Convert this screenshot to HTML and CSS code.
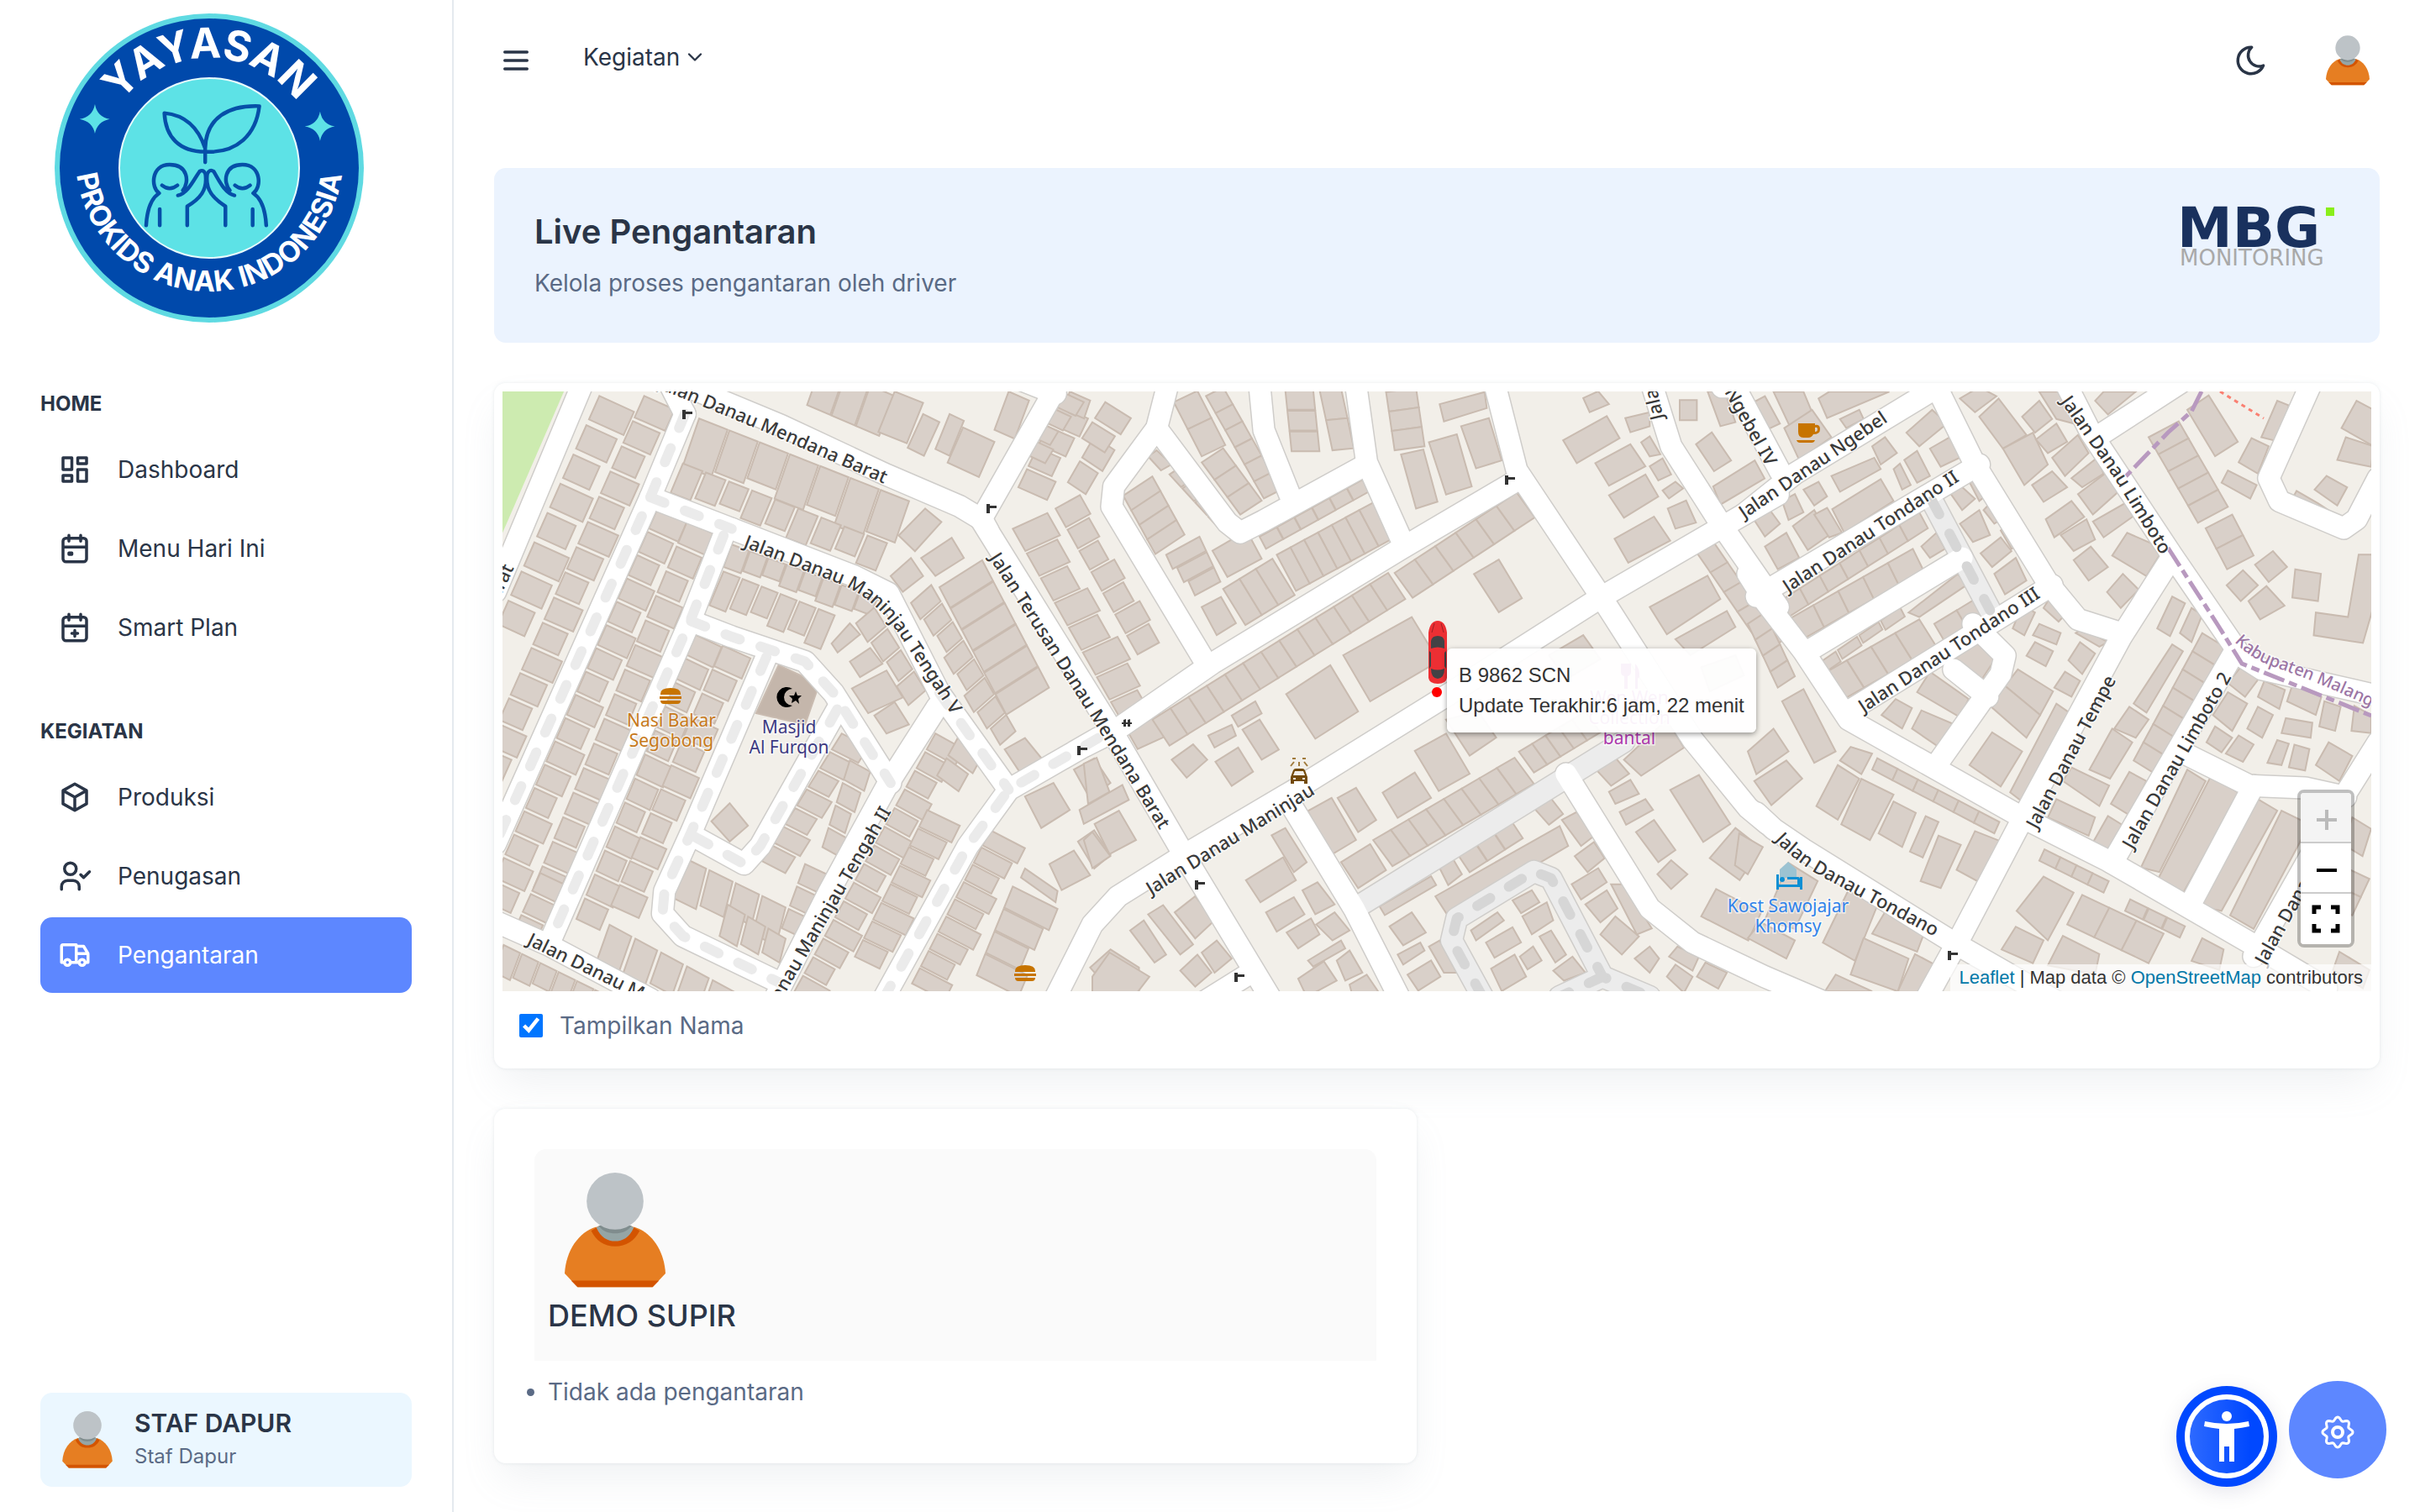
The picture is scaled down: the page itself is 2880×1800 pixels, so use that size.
FILE: index.html
```html
<!DOCTYPE html>
<html lang="id">
<head>
<meta charset="utf-8">
<meta name="viewport" content="width=device-width, initial-scale=1">
<title>Live Pengantaran</title>
<link rel="stylesheet" href="styles.css">
</head>
<body>
<svg width="0" height="0" class="sprite" aria-hidden="true">
  <symbol id="person" viewBox="0 0 156 178">
    <path d="M0 156C2 120 22 92 48 84H108C134 92 154 120 156 156L136 177H20Z" fill="#e67e22"/>
    <path d="M10 167H146L136 177H20Z" fill="#d35400"/>
    <path d="M41 90L52 83H104L116 90C108 106 95 114 78 114S49 106 41 90Z" fill="#d35400"/>
    <path d="M49 85L58 80H98L107 85C100 100 90 106 78 106S56 100 49 85Z" fill="#95a5a5"/>
    <path d="M52 82H104C96 92 88 94 78 94S60 92 52 82Z" fill="#7f8c8d"/>
    <circle cx="78" cy="44" r="44" fill="#bdc3c7"/>
  </symbol>
</svg>
<div class="layout">
  <aside class="sidebar">
    <a href="#" class="brand" aria-label="Yayasan Prokids Anak Indonesia">
      <svg viewBox="48 0 400 400" width="400" height="400">
        <defs>
          <path id="arcTop" d="M118 200A131 131 0 0 1 380 200"/>
          <path id="arcBottom" d="M91 170A159 159 0 1 0 407 170"/>
        </defs>
        <circle cx="249" cy="200" r="184" fill="#5fdae2"/>
        <circle cx="249" cy="200" r="178" fill="#0049ab"/>
        <circle cx="249" cy="200" r="107" fill="#5de2e6" stroke="#e8fbfc" stroke-width="2"/>
        <text class="seal-top"><textPath href="#arcTop" startOffset="50%">YAYASAN</textPath></text>
        <text class="seal-bottom"><textPath href="#arcBottom" startOffset="50%">PROKIDS ANAK INDONESIA</textPath></text>
        <g transform="scale(.3444 .3333)">
          <path d="M328 372Q336 418 379 425Q336 434 328 477Q320 434 275 425Q320 418 328 372ZM1106 398Q1114 444 1157 451Q1114 460 1106 503Q1098 460 1053 451Q1098 444 1106 398Z" fill="#5de2e6"/>
          <g fill="none" stroke="#064fa8" stroke-width="13" stroke-linecap="round" stroke-linejoin="round">
            <path d="M709 580V530C690 470 650 412 568 404C572 490 620 542 709 542C820 548 885 480 896 379C790 375 712 420 709 530"/>
            <path d="M505 805C508 750 520 710 550 690C520 670 522 588 586 588C650 588 655 650 632 680M560 662Q586 684 613 662M615 698C650 690 670 640 690 612Q704 604 710 622C718 680 690 710 647 737V805M552 747V805"/>
            <path d="M920 805C917 750 905 710 875 690C905 670 903 588 838 588C775 588 770 650 794 680M812 662Q838 684 864 662M810 698C775 690 755 640 738 612Q724 602 716 622C708 680 740 710 779 737V805M873 747V805"/>
          </g>
        </g>
      </svg>
    </a>
    <nav class="nav">
      <h2 class="nav-title">HOME</h2>
      <ul class="nav-list">
        <li><a href="#" class="nav-link"><svg class="icon" viewBox="0 0 24 24"><path d="M4 4h6v8h-6zM4 16h6v4h-6zM14 12h6v8h-6zM14 4h6v4h-6z"/></svg>Dashboard</a></li>
        <li><a href="#" class="nav-link"><svg class="icon" viewBox="0 0 24 24"><path d="M4 7a2 2 0 0 1 2-2h12a2 2 0 0 1 2 2v12a2 2 0 0 1-2 2H6a2 2 0 0 1-2-2zM16 3v4M8 3v4M4 11h16M8 15h2v1H8z"/></svg>Menu Hari Ini</a></li>
        <li><a href="#" class="nav-link"><svg class="icon" viewBox="0 0 24 24"><path d="M4 7a2 2 0 0 1 2-2h12a2 2 0 0 1 2 2v12a2 2 0 0 1-2 2H6a2 2 0 0 1-2-2zM16 3v4M8 3v4M4 11h16M10 16h4M12 14v4"/></svg>Smart Plan</a></li>
      </ul>
      <h2 class="nav-title">KEGIATAN</h2>
      <ul class="nav-list">
        <li><a href="#" class="nav-link"><svg class="icon" viewBox="0 0 24 24"><path d="M12 3l8 4.500v9L12 21l-8-4.500v-9zM12 12l8-4.500M12 12v9M12 12L4 7.500"/></svg>Produksi</a></li>
        <li><a href="#" class="nav-link"><svg class="icon" viewBox="0 0 24 24"><path d="M5 7a4 4 0 1 0 8 0a4 4 0 1 0-8 0M3 21v-2a4 4 0 0 1 4-4h4a4 4 0 0 1 4 4v2M16 11l2 2l4-4"/></svg>Penugasan</a></li>
        <li><a href="#" class="nav-link active" aria-current="page"><svg class="icon" viewBox="0 0 24 24"><path d="M5 17a2 2 0 1 0 4 0a2 2 0 1 0-4 0M15 17a2 2 0 1 0 4 0a2 2 0 1 0-4 0M5 17H3V6a1 1 0 0 1 1-1h9v12M9 17h6M19 17h2v-6h-8M13 6h5l3 5"/></svg>Pengantaran</a></li>
      </ul>
    </nav>
    <div class="profile">
      <svg width="60" height="68" aria-hidden="true"><use href="#person"/></svg>
      <div>
        <p class="profile-name">STAF DAPUR</p>
        <p class="profile-role">Staf Dapur</p>
      </div>
    </div>
  </aside>

  <div class="page">
    <header class="topbar">
      <button type="button" class="bare" aria-label="Menu"><svg class="icon icon-menu" viewBox="0 0 24 24"><path d="M4 6h16M4 12h16M4 18h16"/></svg></button>
      <button type="button" class="bare topbar-menu">Kegiatan<svg class="icon icon-chevron" viewBox="0 0 24 24"><path d="M6 9l6 6l6-6"/></svg></button>
      <button type="button" class="bare topbar-theme" aria-label="Mode gelap"><svg class="icon" viewBox="0 0 24 24"><path d="M12 3h.393a7.500 7.500 0 0 0 7.920 12.446A9 9 0 1 1 12 2.992z"/></svg></button>
      <button type="button" class="bare" aria-label="Akun"><svg width="52" height="60"><use href="#person"/></svg></button>
    </header>

    <main class="content">
      <section class="banner">
        <div>
          <h1>Live Pengantaran</h1>
          <p>Kelola proses pengantaran oleh driver</p>
        </div>
        <svg class="mbg" viewBox="0 0 184 76" width="184" height="76" role="img" aria-label="MBG Monitoring">
          <text class="mbg-main" x="-5" y="50">MBG</text>
          <text class="mbg-sub" x="-2" y="72">MONITORING</text>
          <rect x="172" y="3" width="10" height="10" fill="#89ee1a"/>
        </svg>
      </section>

      <section class="card map-card">
        <div class="map">
          <svg class="map-canvas" viewBox="598 466 2224 714" preserveAspectRatio="xMidYMid slice">
            <defs>
              <path id="p1" d="M740 446L805 471L919 518L997 552L1052 576"/>
              <path id="p2" d="M884 651L1004 697Q1040 713 1068 752L1132 850"/>
              <path id="p3" d="M1177 664L1300 857L1390 1004"/>
              <path id="p4" d="M860 1310L1061 966"/>
              <path id="p5" d="M626 1124L900 1258"/>
              <path id="p6" d="M1370 1066L1580 936"/>
              <path id="p7" d="M1980 498L1944 340"/>
              <path id="p8" d="M1970 320L2102 556"/>
              <path id="p9" d="M2076 618L2270 486"/>
              <path id="p10" d="M2128 706L2360 554"/>
              <path id="p11" d="M2218 849L2450 697"/>
              <path id="p12" d="M2452 478L2516 569L2592 694"/>
              <path id="p13" d="M2659 764Q2680 786 2712 796Q2760 812 2840 850"/>
              <path id="p14" d="M2424 988L2533 782"/>
              <path id="p15" d="M2538 1012L2668 785"/>
              <path id="p16" d="M2112 1000Q2140 1030 2180 1050L2330 1130"/>
              <path id="p17" d="M2696 1150L2800 962"/>
              <path id="p18" d="M500 910L612 676"/>
            </defs>
            <rect x="598" y="466" width="2224" height="714" fill="#f2efe9"/>
            <g id="buildings" class="buildings"></g>
            <g id="roads"></g>
            <g class="boundary">
              <path d="M2620 466L2608 490L2580 515L2530 567"/>
              <path d="M2580 652L2640 745L2668 790L2822 852"/>
              <path class="footway" d="M2642 466L2694 498"/>
            </g>
            <g class="street">
              <text class="end"><textPath href="#p1" startOffset="100%">Jalan Danau Mendana Barat</textPath></text>
              <text><textPath href="#p2">Jalan Danau Maninjau Tengah V</textPath></text>
              <text><textPath href="#p3">Jalan Terusan Danau Mendana Barat</textPath></text>
              <text class="end"><textPath href="#p4" startOffset="100%">Jalan Danau Maninjau Tengah II</textPath></text>
              <text><textPath href="#p5">Jalan Danau Maninjau</textPath></text>
              <text><textPath href="#p6">Jalan Danau Maninjau</textPath></text>
              <text><textPath href="#p7">Jalan Danau</textPath></text>
              <text class="end"><textPath href="#p8" startOffset="100%">Jalan Danau Ngebel IV</textPath></text>
              <text><textPath href="#p9">Jalan Danau Ngebel</textPath></text>
              <text><textPath href="#p10">Jalan Danau Tondano II</textPath></text>
              <text><textPath href="#p11">Jalan Danau Tondano III</textPath></text>
              <text><textPath href="#p12">Jalan Danau Limboto</textPath></text>
              <text class="district"><textPath href="#p13">Kabupaten Malang</textPath></text>
              <text><textPath href="#p14">Jalan Danau Tempe</textPath></text>
              <text><textPath href="#p15">Jalan Danau Limboto 2</textPath></text>
              <text><textPath href="#p16">Jalan Danau Tondano</textPath></text>
              <text><textPath href="#p17">Jalan Danau</textPath></text>
              <text class="end"><textPath href="#p18" startOffset="100%">Barat</textPath></text>
            </g>
            <g class="place">
              <text x="799" y="865" fill="#c77a1c">Nasi Bakar</text><text x="799" y="889" fill="#c77a1c">Segobong</text>
              <text x="939" y="873" fill="#3d3a82">Masjid</text><text x="939" y="897" fill="#3d3a82">Al Furqon</text>
              <text x="2128" y="1086" fill="#2f82ea">Kost Sawojajar</text><text x="2128" y="1110" fill="#2f82ea">Khomsy</text>
              <text x="1939" y="838" fill="#ac39ac">Wen Wen</text><text x="1939" y="862" fill="#ac39ac">Collection</text><text x="1939" y="886" fill="#ac39ac">bantal</text>
            </g>
            <g id="gates" fill="#333"></g>
            <g fill="#c77400">
              <path id="burger" d="M786 826q0-7 12-7t12 7v1h-24zM785 829h26v3h-26zM786 834h24q0 4-4 4h-16q-4 0-4-4z"/>
              <use href="#burger" x="422" y="330"/>
              <path d="M2140 504h20v2q6-1 6 5t-8 6q-2 4-6 4h-6q-6 0-6-7zM2160 509v5q3 0 3-3t-3-2zM2138 524h22q-1 3-4 3h-14q-3 0-4-3z"/>
            </g>
            <path d="M943 820A12 12 0 1 0 943 840A10 10 0 1 1 943 820ZM947 823l2 5h5l-4 4 1 6-4-4-5 3 1-5-4-4h6z" fill="#000"/>
            <path d="M2128 1026l10 9v10h-20v-10z" fill="#9cc3d2"/>
            <path d="M2114 1041h3v12h22v-6h-12v-3h13q2 0 2 3v-3h3v15h-3v-3h-25v3h-3zM2118 1047a3 3 0 1 0 6 0a3 3 0 1 0-6 0" fill="#0c8fd4"/>
            <path d="M1536 925l3-8q1-2 3-2h8q2 0 3 2l3 8v8h-4v-3h-12v3h-4z" fill="#734a08"/>
            <path d="M1541 918h10l2 5h-14zM1539 926h3v2h-3zM1550 926h3v2h-3z" fill="#f2efe9"/>
            <path d="M1540 907l-4 5M1552 907l4 5M1546 907v5M1538 903h4M1550 903h4" stroke="#a07a3c" stroke-width="2"/>
            <path d="M1929 790v10q0 4 4 5v15h4v-15q4-1 4-5v-10M1946 820v-30q6 6 5 16l-2 2v12z" fill="#ac39ac"/>
          </svg>
          <div class="marker">
            <svg width="24" height="92" viewBox="0 0 24 92" aria-label="B 9862 SCN">
              <path d="M1 14Q3 0 12 0T23 14V68Q22 75 12 75T1 68Z" fill="#ec2f33"/>
              <path d="M4 24Q5 18 12 18T20 24V33Q12 30 4 33ZM4 57Q12 60 20 57Q20 68 12 69Q4 68 4 57ZM2 36l2 2v16l-2 3zM22 36l-2 2v16l2 3z" fill="#424245"/>
              <path d="M5 14L8 3M19 14L16 3" stroke="#9d1f25" stroke-width="1"/>
              <circle cx="11" cy="85" r="6" fill="#ff0000"/>
            </svg>
            <div class="tooltip">B 9862 SCN<br>Update Terakhir:6 jam, 22 menit</div>
          </div>
          <div class="map-tools">
            <div class="zoom">
              <button type="button" disabled aria-label="Perbesar"><svg viewBox="0 0 60 56"><path d="M19 31h24M31 19v24" stroke="#bbb" stroke-width="4"/></svg></button>
              <button type="button" aria-label="Perkecil"><svg viewBox="0 0 60 56"><path d="M19 31h24" stroke="#000" stroke-width="4"/></svg></button>
              <button type="button" aria-label="Layar penuh"><svg viewBox="0 0 60 56"><path d="M16 22v-8h8M36 14h8v8M44 34v8h-8M24 42h-8v-8" fill="none" stroke="#000" stroke-width="5"/></svg></button>
            </div>
            <p class="credit"><a href="#">Leaflet</a> | Map data © <a href="#">OpenStreetMap</a> contributors</p>
          </div>
        </div>
        <label class="check"><input type="checkbox" checked>Tampilkan Nama</label>
      </section>

      <div class="drivers">
        <section class="card driver">
          <div class="driver-head">
            <svg width="120" height="137" aria-hidden="true"><use href="#person"/></svg>
            <h2>DEMO SUPIR</h2>
          </div>
          <ul class="driver-list"><li>Tidak ada pengantaran</li></ul>
        </section>
      </div>
    </main>
  </div>
</div>

<div class="floating">
  <button type="button" class="access" aria-label="Aksesibilitas">
    <svg viewBox="0 0 120 120" width="120" height="120">
      <defs><linearGradient id="blue" x1="0" y1="0" x2="1" y2="0"><stop offset="0" stop-color="#2f6bff"/><stop offset=".8" stop-color="#0048ff"/></linearGradient></defs>
      <circle cx="60" cy="60" r="60" fill="#0048ff"/>
      <circle cx="60" cy="60" r="47" fill="url(#blue)" stroke="#fff" stroke-width="6"/>
      <circle cx="60" cy="36" r="6" fill="#fff"/>
      <path d="M34 42Q60 48 86 42L87 48Q78 50 69 51V90H63V72H57V90H51V51Q42 50 33 48Z" fill="#fff"/>
    </svg>
  </button>
  <button type="button" class="settings" aria-label="Pengaturan">
    <svg viewBox="0 0 40 40" width="40" height="40" fill="none" stroke="#fff" stroke-width="3"><path id="gear" d=""/><circle cx="20" cy="20" r="6" stroke-width="4"/></svg>
  </button>
</div>
<script src="map.js"></script>
</body>
</html>
```
FILE: styles.css
```css
*{box-sizing:border-box}
body{margin:0;background:#fff;color:#5a6a85;font-family:Inter,"Liberation Sans",sans-serif;font-size:28px;line-height:42px}
h1,h2,p,ul{margin:0;padding:0}
a{text-decoration:none}
button{font:inherit;cursor:pointer}
svg{display:block;flex:none}
.sprite{position:absolute}
.layout{display:flex;min-height:100vh}

.sidebar{width:540px;flex:none;display:flex;flex-direction:column;padding:0 48px 30px;border-right:2px solid #e5eaef}
.brand{display:block;margin-bottom:66px}
.seal-top,.seal-bottom{fill:#fff;font-weight:700;text-anchor:middle}
.seal-top{font-size:50px}
.seal-bottom{font-size:34px}
.nav{flex:1}
.nav-title{font-size:24px;line-height:30px;font-weight:700;color:#2a3547;margin-bottom:18px}
.nav-list{list-style:none;display:flex;flex-direction:column;gap:4px;margin-bottom:64px}
.nav-link{display:flex;align-items:center;gap:30px;height:90px;padding:0 20px;border-radius:14px;color:#2a3547}
.nav-link.active{background:#5d87ff;color:#fff}
.icon{width:42px;height:42px;fill:none;stroke:currentColor;stroke-width:2;stroke-linecap:round;stroke-linejoin:round}
.profile{display:flex;align-items:center;gap:26px;height:112px;padding:0 26px;border-radius:14px;background:#ebf7ff}
.profile-name{font-size:30px;line-height:44px;font-weight:600;color:#2a3547}
.profile-role{font-size:24px;line-height:36px;padding-bottom:4px}

.page{flex:1;min-width:0}
.topbar{display:flex;align-items:center;height:144px;padding:0 60px 0 54px}
.bare{display:flex;align-items:center;padding:0;border:0;background:none;color:#2a3547}
.icon-menu{width:40px;height:40px}
.topbar-menu{margin-left:60px;padding-bottom:8px;gap:4px}
.icon-chevron{width:28px;height:28px}
.topbar-theme{margin:0 68px 0 auto}
.content{padding:56px 48px 48px}
.banner{display:flex;justify-content:space-between;align-items:flex-start;min-height:208px;padding:44px 52px 44px 48px;border-radius:14px;background:#ebf3fe;margin-bottom:48px}
.banner h1{font-size:40px;line-height:64px;font-weight:600;color:#2a3547}
.banner p{padding-top:8px}
.mbg{overflow:visible}
.mbg-main{font:700 66px "DejaVu Sans",sans-serif;fill:#19315e}
.mbg-sub{font:26px "DejaVu Sans",sans-serif;fill:#a9a9a9}
.card{background:#fff;border-radius:14px;box-shadow:0 0 4px rgba(145,158,171,.2),0 24px 48px -8px rgba(145,158,171,.14)}

.map-card{padding:10px;margin-bottom:48px}
.map{position:relative;height:714px;overflow:hidden;font-family:"Liberation Sans",Arial,sans-serif;font-size:24px;line-height:36px;color:#333}
.map-canvas{width:100%;height:100%}
.buildings{fill:#d9d0c9;stroke:#c9bbb0;stroke-width:2}
.buildings .worship{fill:#c4b6ab}
.buildings .green{fill:#cdebb0;stroke:none}
.street{font:500 22px "Noto Sans",sans-serif;fill:#3a3a3a;stroke:#fff;stroke-width:3;stroke-opacity:.7;paint-order:stroke}
.street .end{text-anchor:end}
.street .district{font-size:20px;fill:#9c76a5}
.place{font:21px "Noto Sans",sans-serif;text-anchor:middle;stroke:#fff;stroke-width:3;stroke-opacity:.6;paint-order:stroke}
.boundary{fill:none;stroke:#b899bf;stroke-width:5;stroke-dasharray:26 6 10 6}
.boundary .footway{stroke:#fa8072;stroke-width:3;stroke-dasharray:5 5}
.marker{position:absolute;left:50%;top:273px;margin-left:-11px}
.tooltip{position:absolute;left:23px;top:33px;padding:14px;white-space:nowrap;border-radius:6px;background:rgba(255,255,255,.94);box-shadow:0 2px 6px rgba(0,0,0,.4)}
.map-tools{position:absolute;right:0;bottom:0;display:flex;flex-direction:column;align-items:flex-end;gap:20px}
.zoom{width:68px;margin-right:20px;border:4px solid rgba(0,0,0,.25);border-radius:8px;background-clip:padding-box;overflow:hidden}
.zoom button{display:block;width:60px;height:60px;padding:0;border:0;border-bottom:2px solid #ccc;background:#fff}
.zoom button:last-child{border:0}
.zoom button:disabled{background:#f4f4f4}
.zoom svg{width:60px;height:56px}
.credit{padding:0 10px;font-size:22px;line-height:32px;background:rgba(255,255,255,.7)}
.credit a{color:#0078a8}
.check{display:flex;align-items:center;gap:20px;width:max-content;padding:20px}
.check input{width:28px;height:28px;margin:0;accent-color:#0075ff}

.drivers{display:grid;grid-template-columns:1fr 1fr;gap:48px}
.driver{min-height:422px;padding:48px}
.driver-head{display:flex;flex-direction:column;min-height:252px;padding:28px 16px 20px;border-radius:14px 14px 0 0;background:#fafafa}
.driver-head svg{margin-left:20px}
.driver-head h2{font-size:36px;line-height:54px;font-weight:500;color:#2a3547;margin-top:6px}
.driver-list{padding:16px 0 0 16px}

.floating{position:fixed;right:40px;bottom:30px;display:flex;align-items:flex-end;gap:14px}
.access,.settings{padding:0;border:0;border-radius:50%}
.access{box-shadow:0 6px 24px rgba(0,0,80,.1)}
.settings{display:flex;align-items:center;justify-content:center;width:116px;height:116px;margin-bottom:10px;padding-top:6px;background:#5d87ff}
```
FILE: map.js
```js
// Survey sheets: origin and scale of each one in map units.
const sheets = {
  W: [580, 450, 0.4847, 0.5357],
  C: [1300, 450, 0.5102, 0.4783],
  E: [2080, 450, 0.5102, 0.5421]
};
const NS = 'http://www.w3.org/2000/svg';
const nums = s => s.trim().split(/[\s,]+/).map(Number);
const project = (sheet, list) => {
  const [ox, oy, sx, sy] = sheets[sheet];
  const out = [];
  for (let i = 0; i < list.length; i += 2) {
    out.push((ox + list[i] * sx).toFixed(1) + ',' + (oy + list[i + 1] * sy).toFixed(1));
  }
  return out.join(' ');
};
const add = (parent, tag, attrs) => {
  const el = document.createElementNS(NS, tag);
  for (const k in attrs) el.setAttribute(k, attrs[k]);
  parent.appendChild(el);
};

// Terraces: start, end, depth vector, number of houses, gap share.
const terraces = {
  W: `275 40 20 560 85 35 8 .2;385 40 -30 880 75 30 15 .15;418 290 -10 1170 72 30 17 .15;490 320 110 1140 70 28 15 .15
510 570 215 1210 65 28 12 .15;578 595 300 1180 68 28 11 .15;300 1215 680 1400 -35 90 6 .15;480 1065 740 1180 -25 90 4 .12
590 1170 740 1250 -20 70 3 .15;870 790 670 1080 65 30 7 .15;890 850 820 1050 50 25 4 .15;780 1080 720 1230 70 30 3 .15
520 90 1040 275 -40 105 7 .06;480 190 990 370 -30 65 9 .15;820 -30 1000 40 -35 90 3 .05;1000 30 1070 55 -40 90 1 0
1070 80 1110 98 -38 75 1 0;1135 80 1170 95 -35 78 1 0;1168 110 1245 142 -38 78 1 0;1280 30 1330 50 -35 85 1 0
600 370 960 490 -20 50 8 .06;580 430 860 530 -35 75 6 .15;950 510 1080 700 -45 35 4 .12;1215 405 1380 690 -105 60 6 .04
1090 460 1300 790 -50 40 8 .12;1290 335 1600 830 85 -35 9 .1;1395 290 1600 620 60 -30 7 .12;1400 60 1300 250 75 30 4 .15
1490 130 1420 240 50 30 2 .15;1100 790 750 1370 70 35 14 .15;1080 960 900 1290 80 35 8 .1;1155 800 1100 890 60 40 2 .15
1235 1005 1040 1350 85 40 9 .12;1290 1130 1200 1330 110 50 4 .06;40 1260 400 1420 -25 60 8 .1;130 1100 60 1240 70 30 3 .15;1430 30 1480 50 -15 40 1 0`,
  C: `140 245 215 390 -68 48 4 0;180 240 300 380 35 -25 4 .1;250 395 300 510 -78 45 3 .08;305 525 420 450 52 90 3 0
430 440 655 310 45 90 7 0;390 395 635 250 15 30 6 .02;190 60 255 195 55 -28 2 0;255 210 345 340 50 -35 3 0;265 45 400 300 40 -22 6 0
450 30 465 185 65 0 3 .05;530 30 560 180 50 -5 2 0;685 35 705 180 70 -10 3 0;705 485 990 285 42 62 6 0;140 850 690 485 40 65 13 0
655 1150 985 945 45 65 8 0;995 930 1150 830 35 52 5 0;1065 690 1145 640 40 60 1 0;855 1190 980 1105 25 40 3 .02;670 1315 790 1240 12 22 1 0
1410 435 1568 680 40 -25 5 0;-80 30 -170 190 60 30 4 .15;30 60 -30 160 60 40 2 .2`,
  E: `75 490 400 295 20 35 7 0;95 530 385 375 25 48 5 0;160 630 360 500 12 22 4 .1;175 650 400 530 40 60 4 0;435 540 540 480 25 40 2 0
0 540 70 680 40 -25 4 0;290 860 575 1000 12 -25 6 0;1060 560 900 840 60 35 7 0;935 130 1050 318 70 -35 5 0;680 1060 830 1130 12 -25 4 0
880 1170 1010 1230 12 -25 3 .05;780 1135 970 1220 -35 65 3 0;1410 965 1454 990 -20 60 1 0;1360 1060 1320 1140 90 40 2 0;1380 1260 1450 1300 -15 40 1 0`
};
// Single houses by their corners.
const houses = {
  W: `1075 290 1115 320 1050 385 1010 350;895 690 980 650 1020 710 935 745;950 750 1000 720 1035 770 980 790;845 590 890 545 915 570 860 610
890 630 940 600 970 635 915 665;990 440 1040 400 1070 440 1020 475;1065 400 1140 355 1170 400 1100 440;1270 825 1320 800 1365 850 1310 880
550 985 595 945 640 995 595 1030;1320 930 1390 900 1430 960 1360 1000;1440 870 1490 845 1530 900 1480 935;1380 1080 1440 1050 1480 1105 1410 1138
1320 1090 1400 1140 1395 1165 1310 1110;1450 1030 1490 1005 1530 1060 1490 1090;1480 1310 1530 1270 1600 1310 1600 1370 1530 1362`,
  C: `130 195 150 180 185 215 160 230;280 430 360 380 395 450 315 495;255 570 300 545 335 610 290 640;720 190 772 178 805 308 755 325
785 160 850 140 885 270 825 290;860 120 925 100 955 205 895 225;810 65 915 35 920 75 820 108;585 690 745 595 808 705 648 805
452 787 555 715 620 830 520 898;890 488 948 452 1002 548 948 583;325 840 380 805 395 835 340 868;270 890 325 863 335 890 285 920
185 950 235 912 268 950 220 995;287 955 340 920 375 980 325 1015;350 875 390 850 435 925 395 950;-30 1075 70 1013 85 1050 -20 1110
5 1110 62 1077 102 1150 40 1185;-20 960 10 945 40 1030 -10 1060;-20 1150 0 1130 42 1190 0 1220;88 1375 120 1350 172 1435 145 1455
130 1335 165 1312 235 1410 205 1435;192 1330 240 1290 285 1350 240 1395;205 1475 245 1435 278 1480 240 1515;255 1430 290 1400 325 1445 285 1480
0 1490 40 1430 133 1490 90 1550 0 1550;358 1250 445 1193 475 1250 392 1305;418 1138 450 1120 500 1205 470 1230;405 1330 470 1292 495 1335 430 1378
490 1275 525 1255 565 1310 520 1335;453 1380 510 1345 530 1385 480 1420;522 1360 565 1330 600 1375 560 1400;503 1450 580 1400 590 1420 515 1465
480 1495 540 1452 570 1500 500 1540;570 1450 600 1425 630 1480 590 1500;600 1510 640 1485 675 1540 610 1550;502 1078 558 1045 615 1150 560 1185
572 1045 615 1020 662 1100 620 1130;677 1032 752 982 790 1045 712 1095;752 928 825 885 880 985 808 1028;825 850 900 830 942 895 880 940
580 1205 648 1160 685 1225 620 1270;1240 950 1340 850 1380 920 1280 990;800 1290 1090 1115 1110 1165 830 1340;810 1220 840 1195 862 1235 830 1262
1030 1070 1065 1040 1098 1085 1065 1112;693 1365 745 1330 778 1380 725 1412;712 1435 765 1405 775 1425 725 1460;735 1485 790 1450 812 1490 760 1525
785 1415 810 1400 850 1480 820 1480;883 1375 945 1330 960 1350 895 1400;918 1405 980 1367 1000 1405 938 1443;980 1300 1025 1275 1043 1305 1000 1332
1003 1340 1060 1305 1075 1350 1025 1385;930 1470 985 1435 1012 1490 955 1526;1043 1390 1070 1375 1105 1435 1080 1455;997 1440 1028 1415 1048 1450 1015 1472
1075 1475 1120 1440 1150 1480 1100 1500;1095 1100 1130 1080 1170 1140 1140 1165;1125 1190 1170 1155 1195 1195 1155 1230;1118 1260 1180 1220 1200 1255 1140 1298
1150 1310 1200 1275 1225 1320 1185 1355;1185 1385 1220 1340 1275 1390 1235 1435;1210 1260 1240 1260 1305 1370 1270 1385;1265 1445 1300 1415 1322 1445 1300 1480
1345 1440 1365 1415 1415 1440 1400 1475;1340 1490 1360 1460 1400 1490 1380 1530;1410 1490 1430 1455 1480 1480 1460 1520;1175 975 1220 945 1252 985 1210 1015
1205 1030 1255 1000 1275 1035 1220 1060;1230 1080 1290 1048 1308 1075 1245 1112;1268 1130 1310 1100 1360 1175 1320 1205;1318 1235 1350 1200 1388 1235 1350 1272
1348 1025 1415 988 1488 1110 1425 1155;1440 1195 1500 1120 1560 1170 1510 1250;1420 1340 1455 1272 1560 1330 1530 1400;1098 155 1200 95 1230 150 1130 212
1173 212 1255 165 1290 220 1205 268;1205 292 1290 240 1320 295 1240 348;1218 400 1310 345 1348 405 1250 460;1342 325 1385 305 1408 360 1360 375
1145 50 1180 33 1205 65 1160 85;1243 100 1300 85 1300 120 1255 135;1280 160 1300 145 1325 190 1300 195;1300 220 1330 200 1350 240 1320 255
1330 280 1360 258 1378 275 1345 300;1370 55 1410 55 1410 105 1370 105;1408 165 1445 135 1490 205 1450 232;1448 270 1545 205 1568 250 1465 315
1300 570 1435 492 1465 550 1340 638;1360 650 1480 580 1500 620 1395 690;1420 720 1500 690 1520 740 1440 780;1435 33 1475 33 1500 110 1465 120`,
  E: `0 60 40 40 75 100 30 120;60 30 130 30 150 75 100 110;85 110 150 70 195 130 120 180;165 45 190 30 330 30 185 88;215 90 260 70 270 90 230 110
370 120 430 70 465 100 400 150;425 155 480 125 505 170 450 195;290 150 320 130 348 165 310 190;195 215 295 175 310 200 215 250;340 200 355 188 380 235 360 245
365 180 395 160 425 215 395 230;80 270 110 255 130 295 95 312;130 245 165 228 185 260 155 280;105 325 155 290 190 345 140 378;155 300 185 285 220 340 190 350
197 288 310 222 340 270 225 340;0 290 40 275 75 320 40 348;40 370 90 340 120 395 70 420;405 370 440 340 460 375 425 395;375 515 490 430 510 455 400 525
470 250 495 235 530 265 500 290;495 320 540 290 565 345 525 360;515 225 535 212 560 255 540 270;550 290 575 265 600 305 575 320;543 385 590 350 615 380 570 415
575 430 625 395 650 445 600 475;590 335 610 320 635 365 615 375;630 380 640 370 685 435 670 440;540 85 585 45 650 125 595 155;595 155 665 120 700 190 645 235
495 45 540 20 580 40 530 75;640 85 680 50 710 90 670 120;672 135 720 100 745 140 700 165;710 175 770 125 795 165 740 215;663 235 710 205 745 240 690 272
755 220 815 175 830 210 780 240;770 255 840 205 870 245 805 300;695 310 755 270 785 305 715 350;730 345 790 310 810 355 760 380;760 400 800 370 840 415 795 445
805 315 880 275 905 300 830 350;850 390 885 340 970 375 930 435;838 470 875 430 912 465 870 505;680 30 725 30 760 100 720 90;690 505 710 475 745 515 725 535
618 550 640 500 670 515 645 565;665 565 680 540 730 560 720 585;650 610 670 580 712 600 695 633;748 620 775 580 810 605 780 650;715 680 740 645 775 665 755 700
765 560 780 550 840 580 820 590;600 676 630 640 712 688 682 740;565 720 600 676 682 740 650 790;517 850 570 778 640 820 590 897;612 910 720 715 750 735 640 930
395 690 425 645 515 705 495 745;383 770 405 730 480 760 445 810;312 740 345 705 383 725 360 770;480 620 540 570 575 620 540 670;80 710 130 683 205 820 155 845
0 820 60 770 95 820 20 870;15 885 90 840 127 880 55 938;215 840 240 810 290 825 265 870;160 940 210 850 260 880 210 970;218 980 265 880 340 915 285 1015
305 1000 340 930 392 955 360 1030;378 1040 415 962 445 975 408 1053;403 1105 445 1005 497 1025 450 1120;487 1080 530 995 597 1020 545 1110
955 550 990 480 1020 495 985 567;1008 560 1035 505 1060 520 1035 580;900 715 990 585 1015 600 930 735;855 770 890 722 935 750 905 790;797 860 850 770 897 800 845 880
735 885 755 855 843 895 820 940;847 935 890 865 930 885 890 960;700 965 720 925 810 965 795 1005;805 1020 840 962 880 985 850 1040;1120 670 1150 635 1192 660 1160 700
1085 740 1120 690 1165 715 1130 775;1165 770 1190 722 1225 740 1200 790;1070 800 1090 765 1130 790 1105 822;1115 825 1145 785 1180 805 1155 843
1190 700 1205 665 1253 685 1240 727;1258 710 1270 675 1338 700 1325 740;1333 765 1345 710 1383 722 1370 775;1245 780 1255 747 1317 757 1313 790
1212 845 1235 795 1262 803 1245 850;1262 855 1275 805 1310 815 1300 862;1325 850 1355 800 1410 830 1380 885;1408 775 1415 720 1454 740 1454 780
917 1075 1025 860 1068 885 960 1085;957 1100 1080 875 1147 912 1010 1140;1047 1160 1190 925 1235 950 1105 1170;1125 1180 1245 950 1310 980 1180 1210
810 50 830 30 905 30 840 80;1025 70 1075 38 1143 140 1090 172;1145 185 1175 132 1215 150 1190 210;1105 230 1120 203 1187 235 1172 265;1198 130 1235 50 1262 60 1240 140
1068 330 1130 300 1155 345 1093 375;1093 375 1155 345 1180 390 1118 420;1183 410 1225 380 1258 415 1215 448;1117 455 1155 422 1190 455 1150 490
1168 490 1210 457 1252 500 1195 530;1277 420 1337 430 1330 490 1270 482;1320 565 1325 515 1400 525 1425 388 1460 388 1460 500 1435 582
1322 245 1350 215 1398 240 1375 280;1270 265 1280 248 1330 275 1370 300;1385 110 1420 50 1460 70 1460 150;1375 180 1395 130 1460 150 1454 195
627 1170 690 1095 760 1130 700 1235;592 1255 625 1205 690 1235 665 1285;700 1290 735 1225 820 1265 810 1310;1035 1280 1060 1230 1110 1255 1100 1300
-20 1000 35 1030 0 1090 -30 1070;40 1190 95 1065 163 1105 110 1210;175 1240 245 1105 310 1140 250 1280;290 1220 325 1165 415 1210 395 1260
240 1310 270 1230 375 1275 350 1347;350 1347 390 1265 440 1290 400 1360;0 1230 30 1195 110 1235 90 1275;180 1347 205 1310 290 1347`
};
// Roads; kind: w open, d private (dashed), g service, x private service.
const roads = {
  W: `w 235 10 20 475;d 485 80 400 265 20 1035;w 440 0 720 105 980 215 1160 285 1215 315 1230 340;w 440 0 485 80;w 1215 310 1410 0;w 1395 35 1270 -10
w 600 335 900 440 985 478 1110 700;d 400 265 600 335;d 1110 700 1280 915;d 580 350 500 535 155 1250;d 500 540 600 575 780 630 850 700 990 900
d 685 620 500 1010 435 1140 430 1190 480 1240 720 1345;d 510 1020 630 1080 670 1040 860 735;w 1105 730 985 900 840 1140 705 1380
d 1500 800 1280 915 1180 1040 960 1400;w 20 1208 150 1260 400 1380`,
  C: `w -263 347 30 850 210 1180 425 1560;w -15 915 50 880 280 710 720 425 990 255;w -90 1550 0 1360 60 1290 210 1190 480 1020 820 795 1180 550 1470 370 1600 290
w 180 0 150 125 50 270 45 320 265 710;w 150 125 315 360 345 385 400 355 640 215;w 390 20 400 130 460 290;w 615 20 640 210 720 400
w 935 0 990 230 1190 550 1400 900 1530 1070 1575 1110;w 1300 0 1350 170 1470 370 1600 570;w 465 1065 610 1320 720 1550;g 620 1315 1240 905
w 1105 985 1300 1320 1400 1405 1568 1490 1700 1550;x 910 1540 838 1400 850 1345 1030 1228 1070 1245 1190 1490 1300 1540;x 1190 1490 1090 1540;w 250 1560 370 1480`,
  E: `w -10 300 110 210 460 10;w -60 20 -30 20 75 205;w 430 0 530 190 700 450 770 530 870 560;w 0 430 40 490 130 600 235 750 640 965 840 1060 1180 1245 1350 1340
w 20 480 540 190;x 430 270 565 510;w 140 600 500 395;w 230 735 710 455;w 735 0 800 120 990 390 1150 610 1200 640 1480 700;w 830 120 1010 10
w 985 400 870 570 640 970 500 1220 400 1390;w 1130 610 850 1065;w 1020 825 1170 895 1300 900 1395 920;w 1180 895 1030 1160;w 1470 800 1390 920 1180 1270
w 525 540 600 610 590 650 440 850;w 480 640 560 700;w 1320 0 1215 220 1240 270 1390 330 1420 310 1470 220;w 20 955 60 990 130 1035 480 1240 740 1380`
};

const ground = document.getElementById('buildings');
add(ground, 'polygon', { class: 'green', points: project('W', [37, 30, 188, 30, 37, 345]) });
for (const s in terraces) {
  terraces[s].split(/[;\n]/).forEach(line => {
    const [ax, ay, bx, by, dx, dy, n, gap] = nums(line);
    for (let i = 0; i < n; i++) {
      // houses of one terrace differ a little in depth
      const k = gap > 0.05 ? 1 - ((i * 7) % 5) * 0.06 : 1;
      const t = i / n, u = (i + 1 - gap) / n;
      const px = ax + (bx - ax) * t, py = ay + (by - ay) * t;
      const qx = ax + (bx - ax) * u, qy = ay + (by - ay) * u;
      add(ground, 'polygon', { points: project(s, [px, py, qx, qy, qx + dx * k, qy + dy * k, px + dx * k, py + dy * k]) });
    }
  });
}
for (const s in houses) {
  houses[s].split(/[;\n]/).forEach(line => add(ground, 'polygon', { points: project(s, nums(line)) }));
}
add(ground, 'polygon', { class: 'worship', points: project('W', [715, 638, 815, 680, 780, 770, 660, 745]) });

const net = document.getElementById('roads');
const lines = [];
for (const s in roads) {
  roads[s].split(/[;\n]/).forEach(line => lines.push([line[0], project(s, nums(line.slice(2)))]));
}
const stroke = (points, color, width, dash) => {
  const a = { points, fill: 'none', stroke: color, 'stroke-width': width, 'stroke-linejoin': 'round', 'stroke-linecap': 'round' };
  if (dash) a['stroke-dasharray'] = dash;
  add(net, 'polyline', a);
};
const service = k => k === 'g' || k === 'x';
lines.forEach(([k, p]) => stroke(p, '#cfcdca', 28));
lines.filter(l => service(l[0])).forEach(([k, p]) => stroke(p, '#ececec', 25));
lines.filter(l => !service(l[0])).forEach(([k, p]) => stroke(p, '#ffffff', 25));
lines.filter(l => l[0] === 'd').forEach(([k, p]) => stroke(p, '#ebebeb', 12, '18 26'));
lines.filter(l => l[0] === 'x').forEach(([k, p]) => stroke(p, '#d6d6d6', 12, '18 26'));

// Gate marks at road ends.
const gates = document.getElementById('gates');
[[812, 488], [1174, 600], [1282, 888], [1791, 566], [1422, 1048], [1469, 1158], [2318, 1132]].forEach(([x, y]) =>
  add(gates, 'path', { d: `M${x} ${y}h4v2h8v3h-8v6h-4z` }));
add(gates, 'path', { d: 'M1337 857l3-1v9h-3zM1342 857l3-1v9h-3zM1335 860h12v2h-12z' });

// Settings cog outline: eight soft teeth.
let cog = '';
for (let i = 0; i < 96; i++) {
  const a = i / 96 * Math.PI * 2, r = 16 + 2 * Math.cos(8 * a);
  cog += (i ? 'L' : 'M') + (20 + r * Math.sin(a)).toFixed(1) + ' ' + (20 - r * Math.cos(a)).toFixed(1);
}
document.getElementById('gear').setAttribute('d', cog + 'Z');
```
